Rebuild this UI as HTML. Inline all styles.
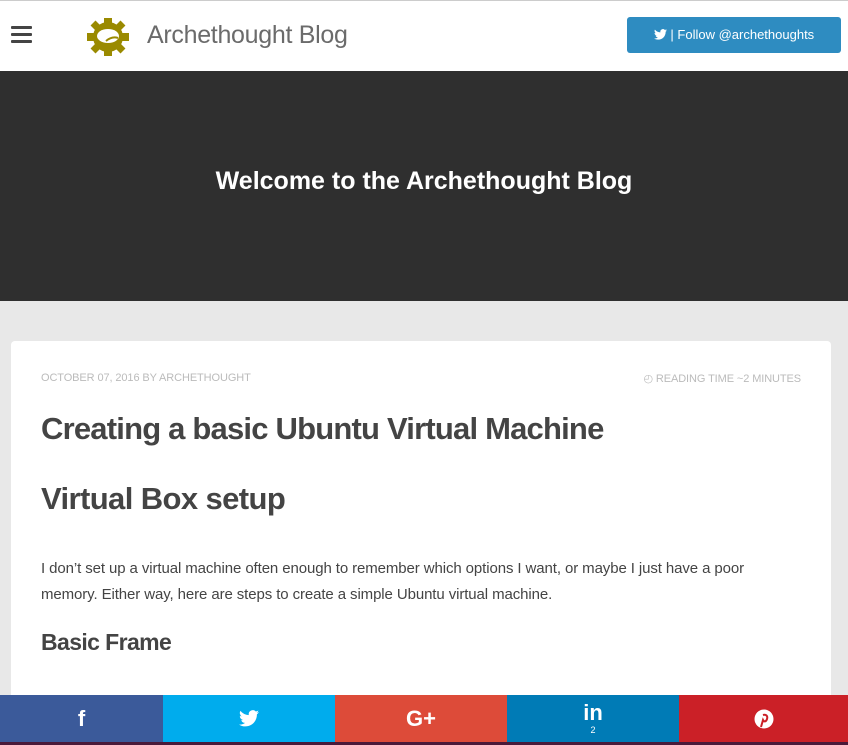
<!DOCTYPE html>
<html><head><meta charset="utf-8"><style>
*{margin:0;padding:0;box-sizing:border-box}
html,body{width:848px;height:745px;overflow:hidden}
body{background:#e8e8e8;font-family:"Liberation Sans",sans-serif;position:relative}
.top{position:absolute;top:0;left:0;width:848px;height:71px;background:#fff;border-top:1px solid #ccc}
.ham{position:absolute;left:11px;top:25px;width:21px}
.ham i{display:block;height:3px;background:#444;margin-bottom:4px;border-radius:1px}
.logo{position:absolute;left:86px;top:16px}
.title{position:absolute;left:147px;top:20px;font-size:25px;color:#6b6b6b;letter-spacing:-0.3px}
.btn{position:absolute;left:627px;top:16px;width:214px;height:36px;background:#2e8cc1;border-radius:3px;color:#fff;font-size:13px;line-height:36px;text-align:center}
.btn svg{vertical-align:-1px}
.hero{position:absolute;top:71px;left:0;width:848px;height:230px;background:#2f2f2f;color:#fff;font-size:25px;font-weight:bold;text-align:center;line-height:220px;letter-spacing:0}
.card{position:absolute;left:11px;top:341px;width:820px;height:404px;background:#fff;border-radius:4px 4px 0 0}
.meta{position:absolute;top:31px;font-size:11px;color:#bbb;letter-spacing:-0.1px}
h1{position:absolute;left:30px;top:70px;font-size:31px;color:#444;letter-spacing:-0.8px}
h2{position:absolute;left:30px;top:140px;font-size:31px;color:#444;letter-spacing:-0.6px}
p{position:absolute;left:30px;top:215px;width:762px;font-size:15px;line-height:26px;color:#444;letter-spacing:-0.1px}
h3{position:absolute;left:30px;top:288px;font-size:23px;color:#444;letter-spacing:-0.6px}
.bar{position:absolute;left:0;top:695px;height:47px;width:848px;display:flex}
.bar div{height:47px;color:#fff;display:flex;align-items:center;justify-content:center;font-weight:bold;font-size:22px;position:relative}
.strip{position:absolute;left:0;top:742px;width:848px;height:3px;background:#4a1a3a}
</style></head><body>
<div class="top">
<div class="ham"><i></i><i></i><i></i></div>
<svg class="logo" width="44" height="40" viewBox="0 0 44 40"><g fill="#9a8a00"><circle cx="22" cy="20" r="15"/><rect x="18" y="1" width="8" height="7"/><rect x="18" y="32" width="8" height="7"/><rect x="1" y="16" width="7" height="8"/><rect x="36" y="16" width="7" height="8"/><rect x="6" y="5" width="7" height="7" transform="rotate(45 9.5 8.5)"/><rect x="31" y="5" width="7" height="7" transform="rotate(45 34.5 8.5)"/><rect x="6" y="28" width="7" height="7" transform="rotate(45 9.5 31.5)"/><rect x="31" y="28" width="7" height="7" transform="rotate(45 34.5 31.5)"/></g><ellipse cx="22" cy="19" rx="11" ry="7" fill="#fff"/><path d="M20 24 q6-5 12-3" stroke="#9a8a00" stroke-width="2" fill="none"/></svg>
<div class="title">Archethought Blog</div>
<div class="btn"><svg width="13" height="11" viewBox="0 0 24 20"><path fill="#fff" d="M24 2.4a10 10 0 0 1-2.8.8A5 5 0 0 0 23.3.4a10 10 0 0 1-3.1 1.2A4.9 4.9 0 0 0 11.8 6 14 14 0 0 1 1.7.9a4.9 4.9 0 0 0 1.5 6.6 4.9 4.9 0 0 1-2.2-.6 4.9 4.9 0 0 0 3.9 4.9 4.9 4.9 0 0 1-2.2.1 4.9 4.9 0 0 0 4.6 3.4A9.9 9.9 0 0 1 0 17.3 14 14 0 0 0 7.5 19.5c9 0 14-7.5 14-14v-.6A10 10 0 0 0 24 2.4z"/></svg> | Follow @archethoughts</div>
</div>
<div class="hero">Welcome to the Archethought Blog</div>
<div class="card">
<div class="meta" style="left:30px">OCTOBER 07, 2016 BY ARCHETHOUGHT</div>
<div class="meta" style="right:30px">&#9716; READING TIME ~2 MINUTES</div>
<h1>Creating a basic Ubuntu Virtual Machine</h1>
<h2>Virtual Box setup</h2>
<p>I don’t set up a virtual machine often enough to remember which options I want, or maybe I just have a poor memory. Either way, here are steps to create a simple Ubuntu virtual machine.</p>
<h3>Basic Frame</h3>
</div>
<div class="bar">
<div style="width:163px;background:#3b5a9a">f</div>
<div style="width:172px;background:#00aced"><svg width="20" height="17" viewBox="0 0 24 20"><path fill="#fff" d="M24 2.4a10 10 0 0 1-2.8.8A5 5 0 0 0 23.3.4a10 10 0 0 1-3.1 1.2A4.9 4.9 0 0 0 11.8 6 14 14 0 0 1 1.7.9a4.9 4.9 0 0 0 1.5 6.6 4.9 4.9 0 0 1-2.2-.6 4.9 4.9 0 0 0 3.9 4.9 4.9 4.9 0 0 1-2.2.1 4.9 4.9 0 0 0 4.6 3.4A9.9 9.9 0 0 1 0 17.3 14 14 0 0 0 7.5 19.5c9 0 14-7.5 14-14v-.6A10 10 0 0 0 24 2.4z"/></svg></div>
<div style="width:172px;background:#dd4b39">G+</div>
<div style="width:172px;background:#007bb6;flex-direction:column;line-height:1">in<span style="font-size:9px;font-weight:normal;margin-top:2px">2</span></div>
<div style="width:169px;background:#cb2027"><svg width="20" height="20" viewBox="0 0 20 20"><circle cx="10" cy="10" r="9.5" fill="#fff"/><path d="M9 6c3-1 5 1 4 4s-3 3-4 1l-2 7" stroke="#cb2027" stroke-width="2" fill="none"/></svg></div>
</div>
<div class="strip"></div>
</body></html>
